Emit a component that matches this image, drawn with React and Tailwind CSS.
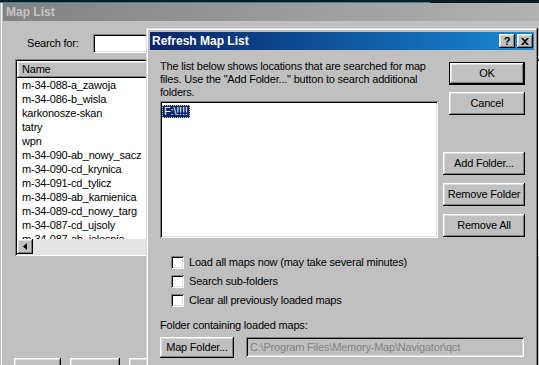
const raised =
  "bg-[#c0c0c0] shadow-[inset_-1px_-1px_0_#000,inset_1px_1px_0_#fff,inset_-2px_-2px_0_#808080,inset_2px_2px_0_#dfdfdf]";
const sunken =
  "shadow-[inset_1px_1px_0_#808080,inset_-1px_-1px_0_#fff,inset_2px_2px_0_#000,inset_-2px_-2px_0_#dfdfdf]";

const maps = [
  "m-34-088-a_zawoja",
  "m-34-086-b_wisla",
  "karkonosze-skan",
  "tatry",
  "wpn",
  "m-34-090-ab_nowy_sacz",
  "m-34-090-cd_krynica",
  "m-34-091-cd_tylicz",
  "m-34-089-ab_kamienica",
  "m-34-089-cd_nowy_targ",
  "m-34-087-cd_ujsoly",
  "m-34-087-ab_jelesnia",
];

function Button({ children, className = "" }) {
  return (
    <div className={`flex items-center justify-center ${raised} ${className}`}>
      {children}
    </div>
  );
}

function Checkbox({ label }) {
  return (
    <div className="flex h-[13px] items-center">
      <div className={`h-[13px] w-[13px] bg-white ${sunken}`} />
      <span className="ml-[5px] leading-[13px]">{label}</span>
    </div>
  );
}

export default function App() {
  return (
    <div className="relative h-[365px] w-[539px] overflow-hidden bg-[#c0c0c0] font-['Liberation_Sans',Arial,sans-serif] text-[11px] tracking-[-0.2px] text-black">
      <div className="h-[2px] bg-[#0d1b22]" />
      <div className="h-[1px] bg-[#0d1b22]">
        <div className="h-full w-[430px] bg-[#2e8a8c]" />
      </div>

      {/* Map List window (inactive, behind) */}
      <div className="ml-[1px] flex h-[362px] flex-col border-l border-[#f4f4f4] pl-[1px]">
        <div className="flex h-[21px] items-center bg-gradient-to-r from-[#828282] to-[#b2b2b2] pl-[3px] text-[12px] font-bold tracking-normal text-[#c4c4c4]">
          Map List
        </div>

        <div className="mt-[13px] flex items-center">
          <span className="ml-[24px] w-[66px]">Search for:</span>
          <div className={`h-[19px] w-[120px] bg-white ${sunken}`} />
        </div>

        <div className={`ml-[12px] mt-[6px] flex h-[197px] w-[560px] flex-col bg-white p-[2px] ${sunken}`}>
          <div className={`flex h-[17px] w-[200px] items-center pl-[5px] ${raised}`}>Name</div>
          <div className="h-[161px] overflow-hidden">
            {maps.map((m) => (
              <div key={m} className="h-[14px] pl-[5px] leading-[14px]">
                {m}
              </div>
            ))}
          </div>
          <div className="flex h-[15px] bg-[#e4e4e4]">
            <Button className="h-[15px] w-[16px]">
              <svg width="4" height="7" viewBox="0 0 4 7">
                <path d="M4 0V7L0 3.5Z" fill="#000" />
              </svg>
            </Button>
          </div>
        </div>

        <div className="ml-[11px] mt-[102px] flex gap-[9px]">
          <Button className="h-[23px] w-[47px]" />
          <Button className="h-[23px] w-[50px]" />
          <Button className="h-[23px] w-[50px]" />
        </div>
      </div>

      {/* Refresh Map List dialog */}
      <div className="absolute left-[146px] top-[28px] flex h-[345px] w-[392px] flex-col bg-[#c0c0c0] p-[4px] shadow-[inset_-1px_-1px_0_#000,inset_1px_1px_0_#dfdfdf,inset_-2px_-2px_0_#808080,inset_2px_2px_0_#fff]">
        <div className="flex h-[18px] items-center bg-gradient-to-r from-[#0a246a] to-[#1a8ad4] pl-[2px] pr-[1px]">
          <span className="text-[12px] font-bold tracking-normal text-white">Refresh Map List</span>
          <div className="ml-auto flex gap-[2px]">
            <Button className="h-[14px] w-[16px] text-[11px] font-bold leading-none tracking-normal">?</Button>
            <Button className="h-[14px] w-[16px]">
              <svg width="8" height="7" viewBox="0 0 8 7">
                <path d="M0 0h2l2 2 2-2h2L5 3.5 8 7H6L4 5 2 7H0l3-3.5z" fill="#000" />
              </svg>
            </Button>
          </div>
        </div>

        <div className="flex pl-[10px] pt-[10px]">
          <div className="flex w-[278px] flex-col">
            <div className="h-[39px] leading-[13px] whitespace-nowrap">
              <div>The list below shows locations that are searched for map</div>
              <div>files. Use the "Add Folder..." button to search additional</div>
              <div>folders.</div>
            </div>
            <div className={`mt-[2px] h-[137px] bg-white p-[2px] ${sunken}`}>
              <span className="inline-block h-[13px] bg-[#0a246a] px-[2px] leading-[13px] text-white outline outline-1 outline-dotted -outline-offset-1 outline-[#d8d890]">
                F:\!!!!
              </span>
            </div>
          </div>

          <div className="ml-[5px] flex w-[82px] flex-col pt-[2px]">
            <div className="ml-auto h-[23px] w-[76px] border border-black">
              <Button className="h-full w-full">OK</Button>
            </div>
            <Button className="ml-auto mt-[7px] h-[23px] w-[76px]">Cancel</Button>
            <Button className="mt-[37px] h-[23px] w-[82px]">Add Folder...</Button>
            <Button className="mt-[8px] h-[23px] w-[82px]">Remove Folder</Button>
            <Button className="mt-[8px] h-[23px] w-[82px]">Remove All</Button>
          </div>
        </div>

        <div className="ml-[21px] mt-[18px] flex flex-col gap-[6px]">
          <Checkbox label="Load all maps now (may take several minutes)" />
          <Checkbox label="Search sub-folders" />
          <Checkbox label="Clear all previously loaded maps" />
        </div>

        <div className="ml-[10px] mt-[12px] h-[13px] leading-[13px]">Folder containing loaded maps:</div>

        <div className="ml-[10px] mt-[5px] flex items-start">
          <Button className="h-[21px] w-[74px]">Map Folder...</Button>
          <div className={`ml-[12px] flex h-[20px] w-[278px] items-center pl-[4px] text-[#808080] ${sunken}`}>
            C:\Program Files\Memory-Map\Navigator\qct
          </div>
        </div>
      </div>
    </div>
  );
}
